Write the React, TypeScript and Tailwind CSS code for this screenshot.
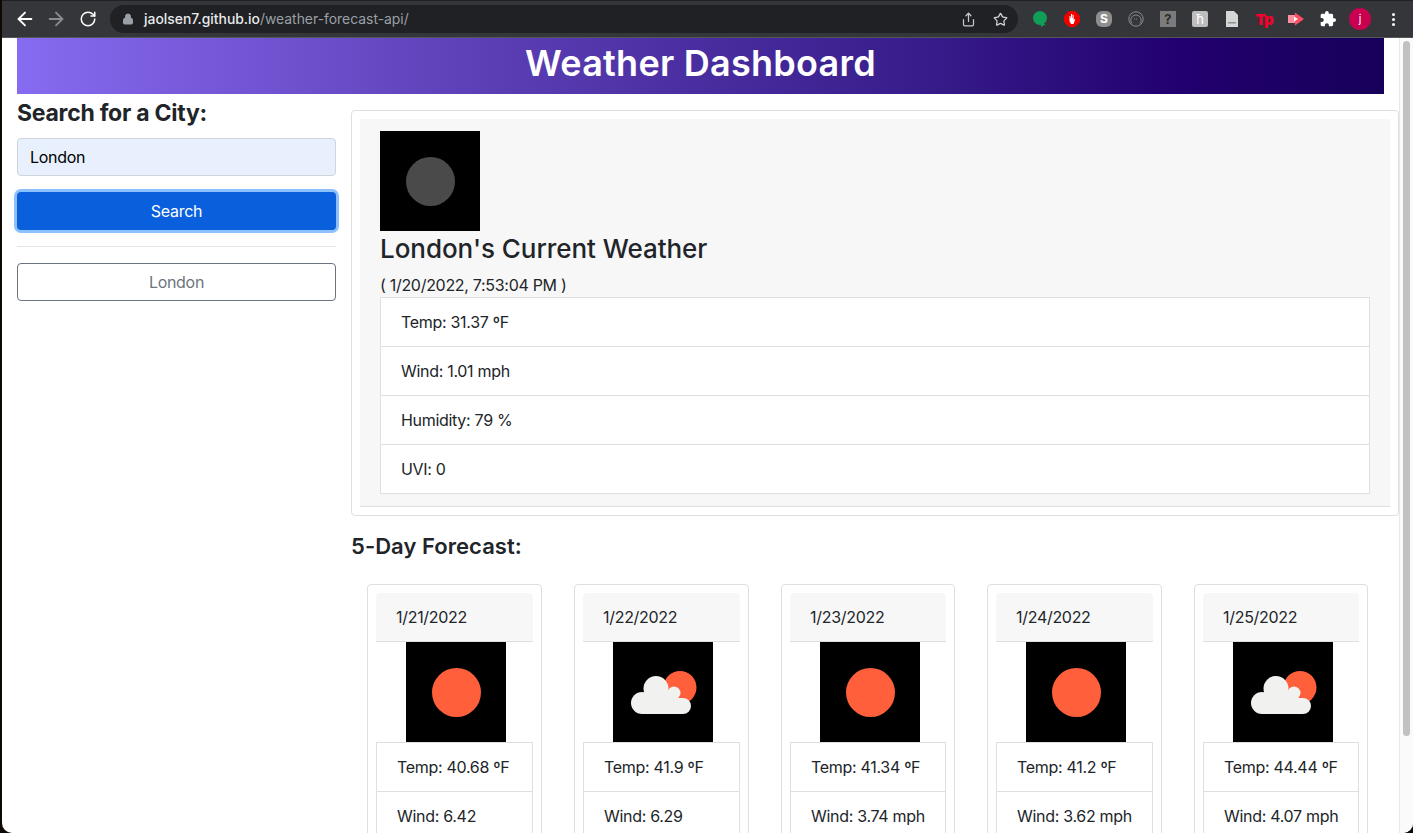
import { ArrowLeft, ArrowRight, RotateCw, Lock, Share, Star } from "lucide-react";
import { MdExtension } from "react-icons/md";

const font = { fontFamily: "Inter, 'Liberation Sans', sans-serif" };

const forecast = [
  { date: "1/21/2022", icon: "sun", temp: "40.68", wind: "6.42", w: "w-[175px]" },
  { date: "1/22/2022", icon: "cloud", temp: "41.9", wind: "6.29", w: "w-[175px]" },
  { date: "1/23/2022", icon: "sun", temp: "41.34", wind: "3.74 mph", w: "w-[174px]" },
  { date: "1/24/2022", icon: "sun", temp: "41.2", wind: "3.62 mph", w: "w-[175px]" },
  { date: "1/25/2022", icon: "cloud", temp: "44.44", wind: "4.07 mph", w: "w-[174px]" },
];

function WeatherIcon({ kind }: { kind: string }) {
  return (
    <svg viewBox="0 0 100 100" className="block h-[100px] w-[100px] bg-black">
      {kind === "moon" && <circle cx="50.5" cy="50.5" r="24.5" fill="#4a4a4a" />}
      {kind === "sun" && <circle cx="50.5" cy="50.5" r="24.5" fill="#ff5f3a" />}
      {kind === "cloud" && (
        <>
          <circle cx="67" cy="45.500" r="16.500" fill="#ff5f3a" />
          <g fill="#f1f1ef">
            <circle cx="29" cy="61" r="11" />
            <circle cx="43" cy="46.500" r="12.500" />
            <circle cx="61" cy="51" r="6.500" />
            <circle cx="70" cy="64" r="8" />
            <rect x="29" y="56" width="41" height="16" />
            <rect x="40" y="50" width="22" height="10" />
          </g>
        </>
      )}
    </svg>
  );
}

function ExtIcons() {
  return (
    <div className="flex items-center">
      {/* hangouts */}
      <svg viewBox="0 0 16 16" className="ml-[14px] h-4 w-4">
        <circle cx="8" cy="7" r="7" fill="#0f9d58" />
        <path d="M9 13h5l-5 3z" fill="#0f9d58" />
      </svg>
      {/* adblock */}
      <svg viewBox="0 0 16 16" className="ml-4 h-4 w-4">
        <polygon points="5,0 11,0 16,5 16,11 11,16 5,16 0,11 0,5" fill="#f20000" />
        <path d="M5.500 8V5h1v2h.5V3h1.200v4h.5V4h1v5l1-1 .5.500L9.500 13H7L5.500 10z" fill="#fff" />
      </svg>
      {/* skype */}
      <div className="ml-4 flex h-4 w-4 items-center justify-center rounded-[6px] bg-[#8e8e8e] text-[12px] font-bold leading-none text-white">
        S
      </div>
      {/* ring */}
      <svg viewBox="0 0 16 16" className="ml-4 h-4 w-4" fill="none" stroke="#8a8b8d">
        <circle cx="8" cy="8" r="7.200" />
        <path d="M4 12.500a5.200 5.200 0 1 1 8 0" />
        <path d="M6.200 8h3.600" strokeDasharray="1 0.800" />
      </svg>
      <div className="ml-4 flex h-4 w-4 items-center justify-center bg-[#7b7b7b] text-[13px] font-bold leading-none text-[#2b2b2b]">
        ?
      </div>
      <div className="ml-4 flex h-4 w-4 items-center justify-center rounded-[2px] bg-[#bdbdbd] text-[13px] leading-none text-white">
        ħ
      </div>
      {/* doc */}
      <svg viewBox="0 0 16 16" className="ml-4 h-4 w-4">
        <path d="M2 0h8l4 4v12H2z" fill="#d6d6d6" />
        <rect x="4" y="11" width="8" height="1.500" fill="#8f8f8f" />
      </svg>
      <div className="ml-4 flex h-4 w-4 items-center justify-center text-[15px] font-black leading-none tracking-[-1px] text-[#f5002d]">
        Tp
      </div>
      {/* arrow */}
      <svg viewBox="0 0 16 16" className="ml-4 h-4 w-4">
        <rect x="0" y="4" width="8" height="8" fill="#ff8f9f" />
        <polygon points="7,1.500 16,8 7,14.500" fill="#ff4d63" />
        <polygon points="6,5.500 10,8 6,10.500" fill="#fff" />
      </svg>
      <MdExtension className="ml-4 h-4 w-4 scale-110 text-white" />
      <div className="ml-[13px] flex h-[22px] w-[22px] items-center justify-center rounded-full bg-[#c8004f] text-[11px] leading-none text-white">
        j
      </div>
      <div className="ml-[21px] mr-[18px] flex flex-col gap-[2px]">
        <span className="h-[3px] w-[3px] rounded-full bg-white" />
        <span className="h-[3px] w-[3px] rounded-full bg-white" />
        <span className="h-[3px] w-[3px] rounded-full bg-white" />
      </div>
    </div>
  );
}

function ListRow({ text, first }: { text: string; first?: boolean }) {
  return (
    <div
      className={`whitespace-nowrap pl-5 text-base leading-6 tracking-[-0.3px] text-[#212529] ${
        first ? "h-[48px] pt-[12px]" : "h-[49px] border-t border-[#dfdfdf] pt-[12px]"
      }`}
    >
      {text}
    </div>
  );
}

export default function App() {
  return (
    <div className="flex h-screen flex-col overflow-hidden bg-[#0f0904] pl-[2px]" style={font}>
      {/* browser toolbar */}
      <div className="flex h-[38px] shrink-0 items-center border-t border-b border-t-[#202124] border-b-[#55565a] bg-[#35363a]">
        <ArrowLeft className="ml-3 h-[22px] w-[22px] text-white" />
        <ArrowRight className="ml-[9px] h-[22px] w-[22px] text-[#8b8c8e]" />
        <RotateCw className="ml-3 h-[18px] w-[18px] text-white" />
        <div className="ml-[13px] flex h-7 w-[908px] items-center rounded-full bg-[#202124] pl-3 pr-[10px] text-[13.9px]">
          <Lock className="h-3 w-3 fill-[#9aa0a6] text-[#9aa0a6]" />
          <span className="ml-[10px] font-medium text-[#e8eaed]">jaolsen7.github.io</span>
          <span className="text-[#9aa0a6]">/weather-forecast-api/</span>
          <Share className="ml-auto h-[15px] w-[15px] text-[#c4c7c9]" />
          <Star className="ml-[17px] h-[15px] w-[15px] text-[#d0d2d4]" />
        </div>
        <ExtIcons />
      </div>

      <div className="flex min-h-0 flex-1 overflow-hidden rounded-b-[10px] bg-white">
        <div className="min-w-0 flex-1 pl-[15px]">
          <div className="mr-[15px] h-14 bg-[linear-gradient(90deg,#876bf0_0%,#5b3eb4_35%,#351a88_68%,#22006f_85%,#17005a_100%)] text-center text-[36px] font-semibold leading-[50px] tracking-[0.25px] text-white">
            Weather Dashboard
          </div>

          <div className="flex">
            <aside className="w-[319px] shrink-0">
              <h2 className="mt-[5px] text-[23px] font-bold leading-[29px] tracking-[-0.25px] text-[#212529]">Search for a City:</h2>
              <div className="mt-[10px] h-[38px] rounded border border-[#ced4da] bg-[#e8f0fe] px-3 text-base leading-9 tracking-[-0.3px] text-black">
                London
              </div>
              <button
                type="button"
                className="mt-4 block h-[38px] w-full rounded bg-[#0a5fdc] text-base tracking-[-0.3px] text-white ring-[3px] ring-[#8cc1fd]"
              >
                Search
              </button>
              <hr className="mt-4 border-[#e3e3e3]" />
              <button
                type="button"
                className="mt-4 block h-[38px] w-full rounded border border-[#6c757d] bg-white text-base tracking-[-0.3px] text-[#6c757d]"
              >
                London
              </button>
            </aside>

            <main className="ml-[15px] min-w-0 flex-1">
              <section className="mt-4 h-[406px] rounded border border-[#dfdfdf] p-2">
                <div className="h-[388px] border-b border-[#dfdfdf] bg-[#f7f7f7] px-5 pt-3">
                  <WeatherIcon kind="moon" />
                  <h3 className="mt-[1px] text-[26px] font-medium leading-[34px] tracking-[-0.05px] text-[#212529]">London's Current Weather</h3>
                  <p className="mt-[10px] text-base leading-[19px] tracking-[-0.3px] text-[#212529]">( 1/20/2022, 7:53:04 PM )</p>
                  <div className="mt-[2px] h-[197px] border border-[#dfdfdf] bg-white">
                    <ListRow first text="Temp: 31.37 ºF" />
                    <ListRow text="Wind: 1.01 mph" />
                    <ListRow text="Humidity: 79 %" />
                    <ListRow text="UVI: 0" />
                  </div>
                </div>
              </section>

              <h3 className="mt-[17px] text-[22px] font-semibold leading-[27px] tracking-[0.05px] text-[#212529]">5-Day Forecast:</h3>

              <div className="mt-6 flex justify-between pl-4 pr-[31px]">
                {forecast.map((day) => (
                  <div key={day.date} className={`${day.w} h-[300px] shrink-0 rounded border border-[#dfdfdf] px-2 pt-2`}>
                    <div className="h-[49px] rounded-t border-b border-[#dfdfdf] bg-[#f7f7f7] pl-5 pt-3 text-base leading-6 tracking-[-0.3px] text-[#212529]">
                      {day.date}
                    </div>
                    <div className="ml-[30px]">
                      <WeatherIcon kind={day.icon} />
                    </div>
                    <div className="border-x border-t border-[#dfdfdf]">
                      <ListRow first text={`Temp: ${day.temp} ºF`} />
                      <ListRow text={`Wind: ${day.wind}`} />
                    </div>
                  </div>
                ))}
              </div>
            </main>
          </div>
        </div>

        {/* scrollbar */}
        <div className="w-[14px] shrink-0 border-l border-[#e8e8e8] bg-[#fafafa] px-[3px] pt-[3px]">
          <div className="h-[695px] rounded-full bg-[#c1c1c1]" />
        </div>
      </div>
    </div>
  );
}
